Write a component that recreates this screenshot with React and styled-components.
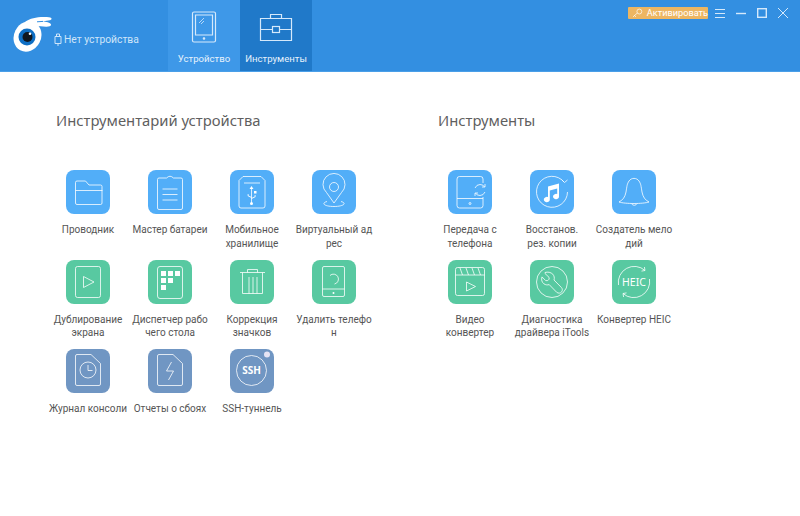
import React from 'react';
import styled, { createGlobalStyle } from 'styled-components';

const Global = createGlobalStyle`
  html, body { margin: 0; padding: 0; background: #fff; }
  body { font-family: Roboto, "Noto Sans", sans-serif; }
`;

const Page = styled.div`
  width: 800px;
  height: 516px;
  overflow: hidden;
  display: flex;
  flex-direction: column;
  background: #fff;
`;

const Header = styled.header`
  height: 72px;
  flex: none;
  display: flex;
  background: #338fe1;
  border-bottom: 1px solid #4a9fe8;
  box-sizing: border-box;
  color: #fff;
`;

const Brand = styled.div`
  width: 168px;
  flex: none;
  display: flex;
  align-items: flex-end;
  padding: 0 0 19px 13px;
  box-sizing: border-box;
`;

const DeviceState = styled.div`
  display: flex;
  align-items: center;
  gap: 2px;
  margin-left: -1px;
  margin-bottom: 4px;
  font-size: 10.3px;
  line-height: 16px;
  color: #cfe5f9;
  white-space: nowrap;
`;

const Tab = styled.div`
  width: 72px;
  height: 71px;
  flex: none;
  display: flex;
  flex-direction: column;
  align-items: center;
  padding-top: 11px;
  box-sizing: border-box;
  background: ${p => (p.$active ? '#2079c9' : '#3e98e8')};
  font-size: 9.6px;
  color: #e6f2fc;
  white-space: nowrap;
`;

const TabLabel = styled.span`
  margin-top: 8px;
  line-height: 16px;
`;

const WindowTools = styled.div`
  margin-left: auto;
  display: flex;
  align-items: flex-start;
  padding: 7px 12px 0 0;
`;

const Activate = styled.div`
  width: 80px;
  height: 12px;
  box-sizing: border-box;
  display: flex;
  align-items: center;
  gap: 4px;
  padding-left: 4px;
  margin-right: 7px;
  background: #edb662;
  border-radius: 1px;
  font-size: 9.2px;
  line-height: 12px;
  color: #fff;
  white-space: nowrap;
`;

const WinButton = styled.svg`
  width: 10px;
  height: 12px;
  margin-left: ${p => (p.$first ? 0 : 11)}px;
  fill: none;
  stroke: #d5e9fb;
  stroke-width: ${p => p.$bold ? 1.4 : 1};
`;

const Main = styled.main`
  flex: 1;
  display: flex;
  align-items: flex-start;
  padding: 37px 0 0 47px;
`;

const Section = styled.section`
  width: ${p => p.$width}px;
  flex: none;
`;

const Title = styled.h2`
  margin: 0 0 39px 9px;
  font-family: "Noto Sans", sans-serif;
  font-size: 14.8px;
  line-height: 22px;
  font-weight: 400;
  color: #5f5f5f;
  white-space: nowrap;
`;

const Grid = styled.div`
  display: grid;
  grid-template-columns: repeat(${p => p.$cols}, 82px);
  grid-auto-rows: 89.5px;
`;

const Tool = styled.div`
  display: flex;
  flex-direction: column;
  align-items: center;
`;

const Tile = styled.div`
  width: 44px;
  height: 44px;
  border-radius: 8px;
  background: ${p => p.$color};
  flex: none;
`;

const TileIcon = styled.svg`
  display: block;
  width: 44px;
  height: 44px;
  fill: none;
  stroke: #fff;
  stroke-opacity: 0.78;
  stroke-width: 1;
`;

const Label = styled.div`
  margin-top: 9px;
  width: 100px;
  text-align: center;
  white-space: pre-line;
  font-size: 10px;
  line-height: 13.500px;
  color: #555;
`;

const Solid = styled.path`
  fill: #fff;
  stroke: none;
`;

const TileText = styled.text`
  fill: #fff;
  stroke: none;
  font-family: "Noto Sans", sans-serif;
  font-weight: ${p => p.$weight || 400};
  font-size: ${p => p.$size}px;
  text-anchor: middle;
`;

const Logo = () => (
  <svg width="42" height="35" viewBox="0 0 42 35">
    <ellipse cx="14.500" cy="19.500" rx="13.500" ry="15.500" fill="#fff" transform="rotate(28 14.500 19.500)" />
    <path d="M12 5C18 .5 27-.5 36 .2c3 .4 3.500 2.300.8 3L29 4.500c4 .2 8.500 1 9 3 .3 1.800-2.500 2.300-5 2.200L25 9C21 6.500 17 5.500 12 5z" fill="#fff" />
    <path d="M24 4.800l6-.4" stroke="#338fe1" strokeWidth="1" />
    <circle cx="14" cy="20" r="8.500" fill="#0f6fc4" />
    <circle cx="14.500" cy="20" r="5" fill="#111820" />
    <circle cx="17" cy="16.800" r="1.300" fill="#fff" />
  </svg>
);

const icons = {
  folder: <><path d="M9.500 33V12.500q0-1.500 1.500-1.500h8.500l3.500 4h11.500q1.500 0 1.500 1.500V33q0 1.500-1.500 1.500H11q-1.500 0-1.500-1.500z" /><path d="M9.500 20.500h27" /></>,
  clipboard: <><path d="M11 8h7.500q3.500-3.500 7 0H33q1.500 0 1.500 1.500V38q0 1.500-1.500 1.500H11q-1.500 0-1.500-1.500V9.500Q9.500 8 11 8z" /><path d="M14.500 19h15M14.500 24.500h15M14.500 30h15" /></>,
  usb: <><path d="M13 6.500h18l4 4V36q0 2-2 2H11q-2 0-2-2V10.500z" /><path d="M14 13h16" /><path d="M21.500 17v17" /><Solid d="M21.500 16l2 3h-4zM24 21h2.500v2.500H24zM21.500 29l4-2v-2h-.8v1.500l-3.200 1.500zM21.500 27l-3-1.500V24h-.8v2l3.800 2z" /><circle cx="21.500" cy="33.500" r="1.500" fill="#fff" stroke="none" /></>,
  pin: <><path d="M22 33L14.500 22.500A11 11 0 1 1 29.500 22.500z" /><circle cx="22" cy="17" r="4.500" /><path d="M15 31.500c-2.500.7-3.500 1.600-3 2.600 1 1.500 5 2.400 10 2.400s9-1 10-2.400c.5-1-.5-2-3-2.600" /></>,
  play: <><rect x="9.500" y="6.500" width="25" height="31" rx="2" /><path d="M17.500 16.500l10.500 5.500-10.500 5.500z" /></>,
  apps: <><rect x="9.500" y="6.500" width="25" height="32" rx="2.500" /><Solid d="M13 11h5v5h-5zM20 11h5v5h-5zM27 11h5v5h-5zM13 18h5v5h-5zM20 18h5v5h-5zM13 25h5v5h-5z" /></>,
  trash: <><path d="M10 12.500h25M17.500 12.500V9.500h10v3M12.500 12.500V33.500h20V12.500M19 17v16.500M23 17v16.500M27 17v16.500" /></>,
  erase: <><rect x="10.500" y="6.500" width="22" height="30" rx="1.500" /><path d="M10.500 29h22" /><path d="M18 15.500a5 5 0 1 1 4.500 8.500" /><circle cx="21.500" cy="33" r="1" fill="#fff" stroke="none" /></>,
  log: <><path d="M11 5.500h14l9.500 9V35q0 1.500-1.500 1.500H11q-1.500 0-1.500-1.500V7Q9.500 5.500 11 5.500z" /><circle cx="22" cy="21" r="8" /><path d="M22 16v5.500h4.500" /></>,
  crash: <><path d="M11 5.500h14l9.500 9V35q0 1.500-1.500 1.500H11q-1.500 0-1.500-1.500V7Q9.500 5.500 11 5.500z" /><path d="M23.500 13l-5 9h7l-5 9" /></>,
  ssh: <><circle cx="21.500" cy="21.500" r="15" /><TileText x="21.500" y="25" $size="10" $weight="700">SSH</TileText><circle cx="37" cy="5.500" r="3" fill="#e6e4f4" stroke="none" /></>,
  transfer: <><path d="M35 13V9q0-2.500-2.500-2.500H11.500q-2.500 0-2.500 2.500v26.500q0 2.500 2.500 2.500H32.500q2.500 0 2.500-2.500V27" /><path d="M9 28.500h26" /><circle cx="22" cy="33.500" r="1" /><path d="M27 18q1.500-3.500 5-3.500t4.500 2.500M37 22q-1.500 3.500-5 3.500t-4.500-2.500M37 14v3h-3M27 26v-3h3" /></>,
  restore: <><path d="M34 12a15.500 15.500 0 1 0 3.500 10" /><path d="M31.500 9.500l3 3 3-2.500" /><Solid d="M18 16.500L29 13.500V26.500a3 2.700 0 1 1-1.800-2.400V18.500L19.800 20.500V29.500a3 2.700 0 1 1-1.800-2.400z" /></>,
  bell: <><path d="M7 32c4-2 6-5 7-10 1-6 1-8 3-11 2.500-3.500 7.500-3.500 10 0 2 3 2 5 3 11 1 5 3 8 7 10-3 1-9 1.500-15 1.500S10 33 7 32z" /><path d="M19.500 33.500a3 3 0 0 0 5.500 0" /></>,
  video: <><rect x="7.500" y="7.500" width="29" height="28" rx="2" /><path d="M7.500 15h29M12 8l2.500 7M18 8l2.500 7M24 8l2.500 7M30 8l2.500 7" /><path d="M18.500 22l9 4.500-9 4.500z" /></>,
  wrench: <><circle cx="22" cy="22" r="15.500" /><path d="M15 13.500l4 3.800.2 1.800-1.500 1.500-2 0-3.700-3.700c-1 3 0 5.500 2 7 1.500 1 3.500 1.300 5.200.7l7.500 7.700c1.500 1.300 4 1 5-.5 1-1.500.8-3-.3-4.300l-7.400-7.500c.7-2 .2-4.200-1.200-5.800-2-2-5-2.500-7.800-1.700z" /></>,
  heic: <><path d="M6.500 25A16 16 0 0 1 33 10.500M33 10.500l-.6-3.500M33 10.500l-3.500.6M37.500 19A16 16 0 0 1 11 33.500M11 33.500l.6 3.500M11 33.500l3.500-.6" /><TileText x="22" y="26" $size="10.500">HEIC</TileText></>,
};

const BLUE = '#52aef8';
const GREEN = '#58c9a1';
const SLATE = '#7096c3';

const deviceTools = [
  { icon: 'folder', color: BLUE, label: 'Проводник' },
  { icon: 'clipboard', color: BLUE, label: 'Мастер батареи' },
  { icon: 'usb', color: BLUE, label: 'Мобильное\nхранилище' },
  { icon: 'pin', color: BLUE, label: 'Виртуальный ад\nрес' },
  { icon: 'play', color: GREEN, label: 'Дублирование\nэкрана' },
  { icon: 'apps', color: GREEN, label: 'Диспетчер рабо\nчего стола' },
  { icon: 'trash', color: GREEN, label: 'Коррекция\nзначков' },
  { icon: 'erase', color: GREEN, label: 'Удалить телефо\nн' },
  { icon: 'log', color: SLATE, label: 'Журнал консоли' },
  { icon: 'crash', color: SLATE, label: 'Отчеты о сбоях' },
  { icon: 'ssh', color: SLATE, label: 'SSH-туннель' },
];

const otherTools = [
  { icon: 'transfer', color: BLUE, label: 'Передача с\nтелефона' },
  { icon: 'restore', color: BLUE, label: 'Восстанов.\nрез. копии' },
  { icon: 'bell', color: BLUE, label: 'Создатель мело\nдий' },
  { icon: 'video', color: GREEN, label: 'Видео\nконвертер' },
  { icon: 'wrench', color: GREEN, label: 'Диагностика\nдрайвера iTools' },
  { icon: 'heic', color: GREEN, label: 'Конвертер HEIC' },
];

const ToolGrid = ({ list, cols }) => (
  <Grid $cols={cols}>
    {list.map(item => (
      <Tool key={item.label}>
        <Tile $color={item.color}>
          <TileIcon viewBox="0 0 44 44">{icons[item.icon]}</TileIcon>
        </Tile>
        <Label>{item.label}</Label>
      </Tool>
    ))}
  </Grid>
);

const App = () => (
  <Page>
    <Global />
    <Header>
      <Brand>
        <Logo />
        <DeviceState>
          <svg width="8" height="14" viewBox="0 0 8 14" fill="none" stroke="#cfe5f9">
            <path d="M2.500 3V1h3v2M1 3.500h6v7H1zM4 10.500V13" />
          </svg>
          Нет устройства
        </DeviceState>
      </Brand>
      <Tab>
        <svg width="26" height="32" viewBox="0 0 26 32" fill="none" stroke="#d5e9fb" strokeWidth="1.200">
          <rect x="1.500" y="1" width="23" height="30" rx="1.500" />
          <path d="M4.500 4h17v20h-17z" />
          <path d="M8 12l5-5M10 13l3-3" strokeWidth="0.800" />
          <circle cx="13" cy="27.500" r="0.700" fill="#fff" />
        </svg>
        <TabLabel>Устройство</TabLabel>
      </Tab>
      <Tab $active>
        <svg width="34" height="32" viewBox="0 0 34 32" fill="none" stroke="#d5e9fb" strokeWidth="1.200">
          <path d="M1.500 7.500h31v22h-31zM11.500 7.500V3.500h11v4M1.500 18.500h12M20.500 18.500h12" />
          <rect x="13.500" y="15.500" width="7" height="6" />
        </svg>
        <TabLabel>Инструменты</TabLabel>
      </Tab>
      <WindowTools>
        <Activate>
          <svg width="11" height="10" viewBox="0 0 11 10" fill="none" stroke="#fff" strokeOpacity="0.7">
            <circle cx="7.500" cy="3.500" r="2.500" />
            <path d="M5.500 5L1 9M2.500 7.500L4 9" />
          </svg>
          Активировать
        </Activate>
        <WinButton viewBox="0 0 10 12" $first><path d="M0 2.500h10M0 6.500h10M0 10.500h10" /></WinButton>
        <WinButton viewBox="0 0 10 12" $bold><path d="M0 6.500h10" /></WinButton>
        <WinButton viewBox="0 0 10 12" $bold><rect x="0.700" y="1.700" width="8.600" height="8.600" /></WinButton>
        <WinButton viewBox="0 0 10 12"><path d="M0 1l10 10M10 1L0 11" /></WinButton>
      </WindowTools>
    </Header>
    <Main>
      <Section $width={382}>
        <Title>Инструментарий устройства</Title>
        <ToolGrid list={deviceTools} cols={4} />
      </Section>
      <Section $width={300}>
        <Title>Инструменты</Title>
        <ToolGrid list={otherTools} cols={3} />
      </Section>
    </Main>
  </Page>
);

export default App;
